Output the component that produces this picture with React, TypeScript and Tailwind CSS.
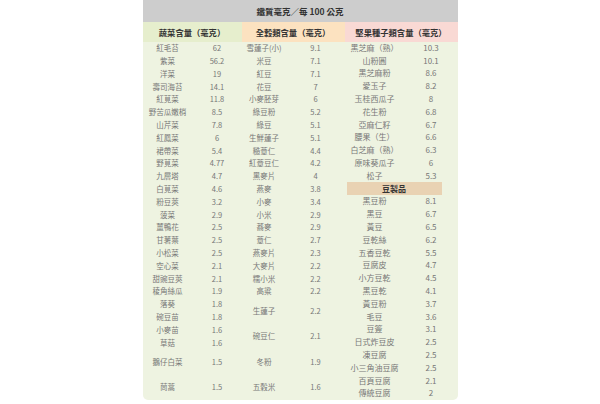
type Cell = { name: string; value: string; span?: boolean };

const veg: Cell[] = [
  { name: "紅毛苔", value: "62" },
  { name: "紫菜", value: "56.2" },
  { name: "洋菜", value: "19" },
  { name: "壽司海苔", value: "14.1" },
  { name: "紅莧菜", value: "11.8" },
  { name: "野苦瓜嫩梢", value: "8.5" },
  { name: "山芹菜", value: "7.8" },
  { name: "紅鳳菜", value: "6" },
  { name: "裙帶菜", value: "5.4" },
  { name: "野莧菜", value: "4.77" },
  { name: "九層塔", value: "4.7" },
  { name: "白莧菜", value: "4.6" },
  { name: "粉豆莢", value: "3.2" },
  { name: "菠菜", value: "2.9" },
  { name: "薑鴨花", value: "2.5" },
  { name: "甘薯葉", value: "2.5" },
  { name: "小松菜", value: "2.5" },
  { name: "空心菜", value: "2.1" },
  { name: "甜豌豆莢", value: "2.1" },
  { name: "稜角絲瓜", value: "1.9" },
  { name: "落葵", value: "1.8" },
  { name: "碗豆苗", value: "1.8" },
  { name: "小麥苗", value: "1.6" },
  { name: "草菇", value: "1.6" },
  { name: "鵝仔白菜", value: "1.5", span: true },
  { name: "茼蒿", value: "1.5", span: true },
];

const grain: Cell[] = [
  { name: "雪蓮子(小)", value: "9.1" },
  { name: "米豆", value: "7.1" },
  { name: "紅豆", value: "7.1" },
  { name: "花豆", value: "7" },
  { name: "小麥胚芽", value: "6" },
  { name: "綠豆粉", value: "5.2" },
  { name: "綠豆", value: "5.1" },
  { name: "生鮮蓮子", value: "5.1" },
  { name: "糙薏仁", value: "4.4" },
  { name: "紅薏豆仁", value: "4.2" },
  { name: "黑麥片", value: "4" },
  { name: "燕麥", value: "3.8" },
  { name: "小麥", value: "3.4" },
  { name: "小米", value: "2.9" },
  { name: "蕎麥", value: "2.9" },
  { name: "薏仁", value: "2.7" },
  { name: "燕麥片", value: "2.3" },
  { name: "大麥片", value: "2.2" },
  { name: "糯小米", value: "2.2" },
  { name: "高粱", value: "2.2" },
  { name: "生蓮子", value: "2.2", span: true },
  { name: "碗豆仁", value: "2.1", span: true },
  { name: "冬粉", value: "1.9", span: true },
  { name: "五穀米", value: "1.6", span: true },
];

const nuts: Cell[] = [
  { name: "黑芝麻（熟）", value: "10.3" },
  { name: "山粉圓", value: "10.1" },
  { name: "黑芝麻粉", value: "8.6" },
  { name: "愛玉子", value: "8.2" },
  { name: "玉桂西瓜子", value: "8" },
  { name: "花生粉", value: "6.8" },
  { name: "亞麻仁籽", value: "6.7" },
  { name: "腰果（生）", value: "6.6" },
  { name: "白芝麻（熟）", value: "6.3" },
  { name: "原味葵瓜子", value: "6" },
  { name: "松子", value: "5.3" },
];

const soy: Cell[] = [
  { name: "黑豆粉", value: "8.1" },
  { name: "黑豆", value: "6.7" },
  { name: "黃豆", value: "6.5" },
  { name: "豆乾絲", value: "6.2" },
  { name: "五香豆乾", value: "5.5" },
  { name: "豆腐皮", value: "4.7" },
  { name: "小方豆乾", value: "4.5" },
  { name: "黑豆乾", value: "4.1" },
  { name: "黃豆粉", value: "3.7" },
  { name: "毛豆", value: "3.6" },
  { name: "豆簽", value: "3.1" },
  { name: "日式炸豆皮", value: "2.5" },
  { name: "凍豆腐", value: "2.5" },
  { name: "小三角油豆腐", value: "2.5" },
  { name: "百頁豆腐", value: "2.1" },
  { name: "傳統豆腐", value: "2" },
];

function Rows({ items }: { items: Cell[] }) {
  return (
    <>
      {items.map((c) => (
        <div key={c.name} className="contents">
          <div
            className={`flex items-center justify-center whitespace-nowrap ${c.span ? "row-span-2" : ""}`}
          >
            {c.name}
          </div>
          <div className={`flex items-center justify-center ${c.span ? "row-span-2" : ""}`}>
            {c.value}
          </div>
        </div>
      ))}
    </>
  );
}

export default function App() {
  return (
    <div
      className="h-[404px] w-[600px] bg-white"
      style={{ fontFamily: '"Noto Sans CJK TC", "Noto Sans", sans-serif' }}
    >
      <div className="mx-auto flex w-[315px] flex-col">
        {/* title */}
        <div className="flex h-[22px] items-center justify-center bg-[#cdcdcd] text-[8.5px] font-bold text-[#333]">
          鐵質毫克／每 100 公克
        </div>

        {/* group headers */}
        <div className="flex h-[19.5px] text-[8.3px] font-bold text-[#333]">
          <div className="flex w-[99px] items-center justify-center bg-[#e6eecd]">蔬菜含量（毫克）</div>
          <div className="flex w-[103px] items-center justify-center bg-[#fce2c0]">全穀類含量（毫克）</div>
          <div className="flex w-[113px] items-center justify-center bg-[#f9d9d4]">堅果種子類含量（毫克）</div>
        </div>

        {/* body */}
        <div className="flex rounded-b-[5px] bg-[#eef3e1] text-[7.5px] text-[#777]">
          <div className="grid w-[99px] grid-cols-[50px_49px] grid-rows-[repeat(28,12.8px)]">
            <Rows items={veg} />
          </div>
          <div className="grid w-[103px] grid-cols-[45px_58px] grid-rows-[repeat(28,12.8px)]">
            <Rows items={grain} />
          </div>
          <div className="grid w-[113px] grid-cols-[60px_53px] grid-rows-[repeat(28,12.8px)] text-[8px]">
            <Rows items={nuts} />
            <div className="col-span-2 flex items-center justify-center pr-[16px] pl-[2px]">
              <div className="flex h-full w-full items-center justify-center bg-[#e9d2b3] font-bold text-[#333]">
                豆製品
              </div>
            </div>
            <Rows items={soy} />
          </div>
        </div>
      </div>
    </div>
  );
}
